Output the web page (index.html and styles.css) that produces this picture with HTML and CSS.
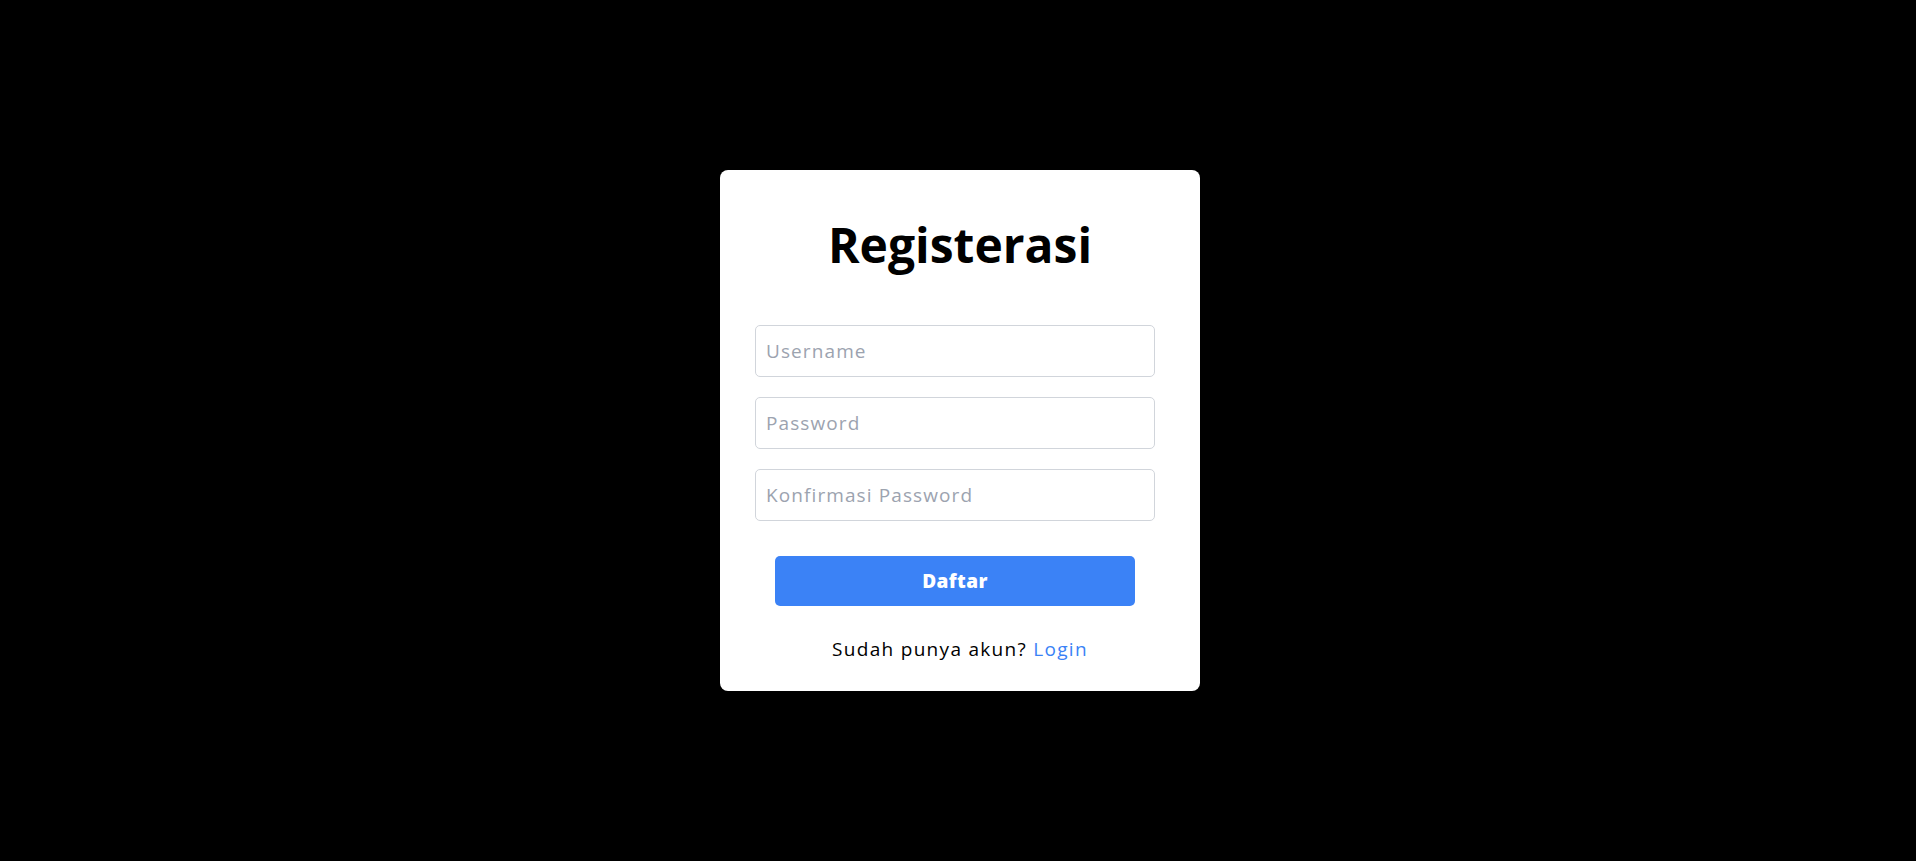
FILE: index.html
```html
<!DOCTYPE html>
<html lang="id">
<head>
<meta charset="utf-8">
<title>Registerasi</title>
<link rel="stylesheet" href="styles.css">
</head>
<body>
<main class="page">
  <div class="card">
    <h1 class="title">Registerasi</h1>
    <form class="form">
      <input class="field" type="text" placeholder="Username">
      <input class="field" type="password" placeholder="Password">
      <input class="field" type="password" placeholder="Konfirmasi Password">
      <button class="submit" type="button">Daftar</button>
    </form>
    <p class="footer">Sudah punya akun? <a class="link" href="#">Login</a></p>
  </div>
</main>
</body>
</html>
```
FILE: styles.css
```css
html, body {
  margin: 0;
  padding: 0;
  background: #000;
}

body {
  font-family: "Open Sans", "Noto Sans", sans-serif;
  color: #000;
}

.page {
  min-height: 100vh;
  box-sizing: border-box;
  display: flex;
  align-items: center;
  justify-content: center;
  padding-left: 4px;
}

.card {
  width: 480px;
  box-sizing: border-box;
  background: #fff;
  border-radius: 8px;
  padding: 47px 40px 28px;
  display: flex;
  flex-direction: column;
}

.title {
  margin: 0;
  font-size: 48px;
  line-height: 56px;
  font-weight: 700;
  text-align: center;
  color: #000;
}

.form {
  margin: 52px 5px 0 -5px;
  display: flex;
  flex-direction: column;
  gap: 20px;
}

.field {
  display: block;
  width: 100%;
  height: 52px;
  box-sizing: border-box;
  margin: 0;
  padding: 0 10px;
  border: 1px solid #d1d5db;
  border-radius: 5px;
  background: #fff;
  font-family: inherit;
  font-size: 19px;
  letter-spacing: 1.1px;
  color: #111;
  outline: none;
}

.field::placeholder {
  color: #9ca3af;
  opacity: 1;
}

.submit {
  align-self: center;
  width: 360px;
  height: 50px;
  margin-top: 15px;
  border: none;
  border-radius: 5px;
  background: #3b82f6;
  color: #fff;
  font-family: inherit;
  font-size: 19px;
  font-weight: 800;
  letter-spacing: 0.4px;
  cursor: pointer;
}

.footer {
  margin: 30px 0 0;
  font-size: 19px;
  line-height: 27px;
  letter-spacing: 1.3px;
  text-align: center;
}

.link {
  color: #3b82f6;
  text-decoration: none;
}
```
